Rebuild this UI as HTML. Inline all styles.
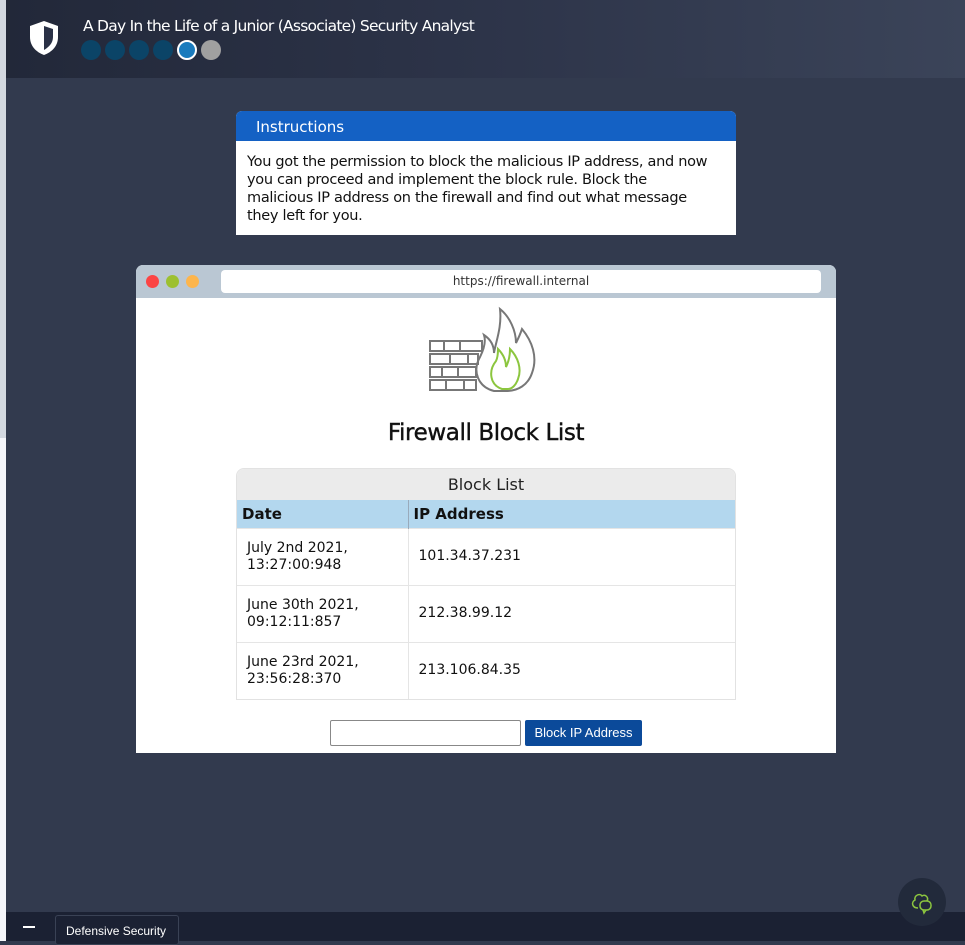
<!DOCTYPE html>
<html><head><meta charset="utf-8"><style>
*{box-sizing:border-box;margin:0;padding:0}
body{width:965px;height:941px;overflow:hidden;background:#323a4e;font-family:"Liberation Sans","DejaVu Sans",sans-serif;position:relative}
.strip{position:absolute;left:0;top:0;width:6px;height:941px;background:#f5f6fa}
.strip2{position:absolute;left:0;top:0;width:6px;height:438px;background:#d3d8e0}
.hdr{position:absolute;left:6px;top:0;width:959px;height:78px;background:linear-gradient(90deg,#222839,#2d3449 50%,#3b4459)}
.title{position:absolute;left:77px;top:17px;color:#fff;font-size:15.5px;font-family:"DejaVu Sans",sans-serif;letter-spacing:-0.75px}
.dots{position:absolute;left:75px;top:40px;display:flex;gap:4px}
.dots span{width:20px;height:20px;border-radius:50%;background:#0b4467}
.card{position:absolute;left:236px;top:111px;width:500px;height:124px;background:#fff;border-radius:6px 6px 0 0;overflow:hidden}
.card .h{background:#1461c4;color:#fff;height:30px;padding:7px 20px;font-size:15px;font-family:"DejaVu Sans",sans-serif}
.card .b{padding:12px 11px;font-size:14.5px;line-height:18px;color:#111;font-family:"DejaVu Sans",sans-serif;letter-spacing:-0.3px;white-space:nowrap}
.win{position:absolute;left:136px;top:265px;width:700px;height:488px;background:#fff;border-radius:7px 7px 0 0;overflow:hidden}
.bar{height:33px;background:#bac7d3;position:relative}
.c{position:absolute;top:10px;width:13px;height:13px;border-radius:50%}
.url{position:absolute;left:85px;top:5px;width:600px;height:23px;background:#fff;border-radius:4px;text-align:center;font-size:12px;line-height:23px;color:#333;font-family:"DejaVu Sans",sans-serif}
h1{position:absolute;left:0;width:700px;top:155px;text-align:center;font-size:23px;font-weight:normal;font-family:"DejaVu Sans",sans-serif;color:#111;letter-spacing:-0.4px;-webkit-text-stroke:0.4px #111}
.tbl{position:absolute;left:100px;top:203px;width:500px;border:1px solid #e2e2e2;border-radius:8px 8px 0 0;overflow:hidden}
.tc{background:#ebebeb;height:31px;text-align:center;font-size:16px;line-height:31px;font-family:"DejaVu Sans",sans-serif;color:#222}
table{border-collapse:collapse;width:100%;font-family:"DejaVu Sans",sans-serif}
th{background:#b3d7ee;text-align:left;font-size:15px;height:28px;padding:0 5px;border-right:1px solid #9ab;color:#111}
td{height:57px;font-size:14px;padding:0 10px;border-top:1px solid #e5e5e5;border-right:1px solid #e5e5e5;color:#111;line-height:17px}
.inp{position:absolute;left:194px;top:455px;width:191px;height:26px;border:1px solid #888;border-radius:2px}
.btn{position:absolute;left:389px;top:455px;width:117px;height:26px;background:#0b4a9a;color:#fff;font-size:13px;text-align:center;line-height:26px;border-radius:2px}
.foot{position:absolute;left:6px;top:912px;width:959px;height:29px;background:#1b2133}
.tab{position:absolute;left:55px;top:915px;width:124px;height:30px;border:1px solid #3a4255;border-radius:3px;color:#fff;font-size:12px;padding:8px 10px;background:#1b2133}
.chat{position:absolute;left:898px;top:878px;width:48px;height:48px;border-radius:50%;background:#222a3b}
</style></head><body>
<div class="strip"></div><div class="strip2"></div>
<div class="hdr">
<svg style="position:absolute;left:21px;top:19px" width="34" height="38" viewBox="0 0 34 38"><path d="M17 2 L31 7 V18 C31 27 25 33 17 36 C9 33 3 27 3 18 V7 Z" fill="#fff"/><path d="M17 7 L26 10 V18 C26 24 22 28 17 31 Z" fill="#2a3146"/></svg>
<div class="title">A Day In the Life of a Junior (Associate) Security Analyst</div>
<div class="dots"><span></span><span></span><span></span><span></span><span style="background:#1a7bbd;border:2px solid #fff"></span><span style="background:#a0a0a0"></span></div>
</div>
<div class="card"><div class="h">Instructions</div><div class="b">You got the permission to block the malicious IP address, and now<br>you can proceed and implement the block rule. Block the<br>malicious IP address on the firewall and find out what message<br>they left for you.</div></div>
<div class="win">
<div class="bar"><div class="c" style="left:10px;background:#fc4444"></div><div class="c" style="left:30px;background:#9dc030"></div><div class="c" style="left:50px;background:#fdb54c"></div><div class="url">https://firewall.internal</div></div>
<svg style="position:absolute;left:290px;top:40px" width="120" height="90" viewBox="0 0 120 90" fill="none" stroke="#777" stroke-width="2">
<rect x="4" y="36" width="52" height="10"/><rect x="4" y="49" width="48" height="10"/><rect x="4" y="62" width="46" height="10"/><rect x="4" y="75" width="46" height="10"/>
<path d="M18 36v10M34 36v10M24 49v10M42 49v10M16 62v10M32 62v10M20 75v10M38 75v10"/>
<path d="M68 86 C52 82 46 66 54 52 C58 44 60 36 58 30 C64 34 68 40 68 48 C70 36 76 22 74 4 C84 12 90 26 90 38 C92 34 94 30 96 24 C106 36 112 52 106 68 C102 80 92 86 80 86 Z"/>
<path d="M76 84 C64 80 62 66 70 56 C72 52 72 48 72 44 C78 50 80 56 80 62 C82 58 84 52 84 44 C92 52 96 64 92 74 C90 80 86 84 82 84 Z" stroke="#8cc63f"/>
</svg>
<h1>Firewall Block List</h1>
<div class="tbl"><div class="tc">Block List</div>
<table><tr><th style="width:171px">Date</th><th style="border-right:0">IP Address</th></tr>
<tr><td>July 2nd 2021,<br>13:27:00:948</td><td style="border-right:0">101.34.37.231</td></tr>
<tr><td>June 30th 2021,<br>09:12:11:857</td><td style="border-right:0">212.38.99.12</td></tr>
<tr><td>June 23rd 2021,<br>23:56:28:370</td><td style="border-right:0">213.106.84.35</td></tr></table></div>
<div class="inp"></div><div class="btn">Block IP Address</div>
</div>
<div class="foot"><div style="position:absolute;left:17px;top:14px;width:12px;height:2px;background:#fff"></div></div>
<div class="tab">Defensive Security</div>
<div class="chat"><svg width="48" height="48" viewBox="0 0 48 48" fill="none" stroke="#8cc63f" stroke-width="1.5"><path d="M20 30 C14 30 13 24 17 22 C16 17 22 15 24 18 C27 16 31 19 29 23"/><rect x="22" y="23" width="11" height="9" rx="4"/><path d="M25 32 l1 3 2-3"/></svg></div>
</body></html>
